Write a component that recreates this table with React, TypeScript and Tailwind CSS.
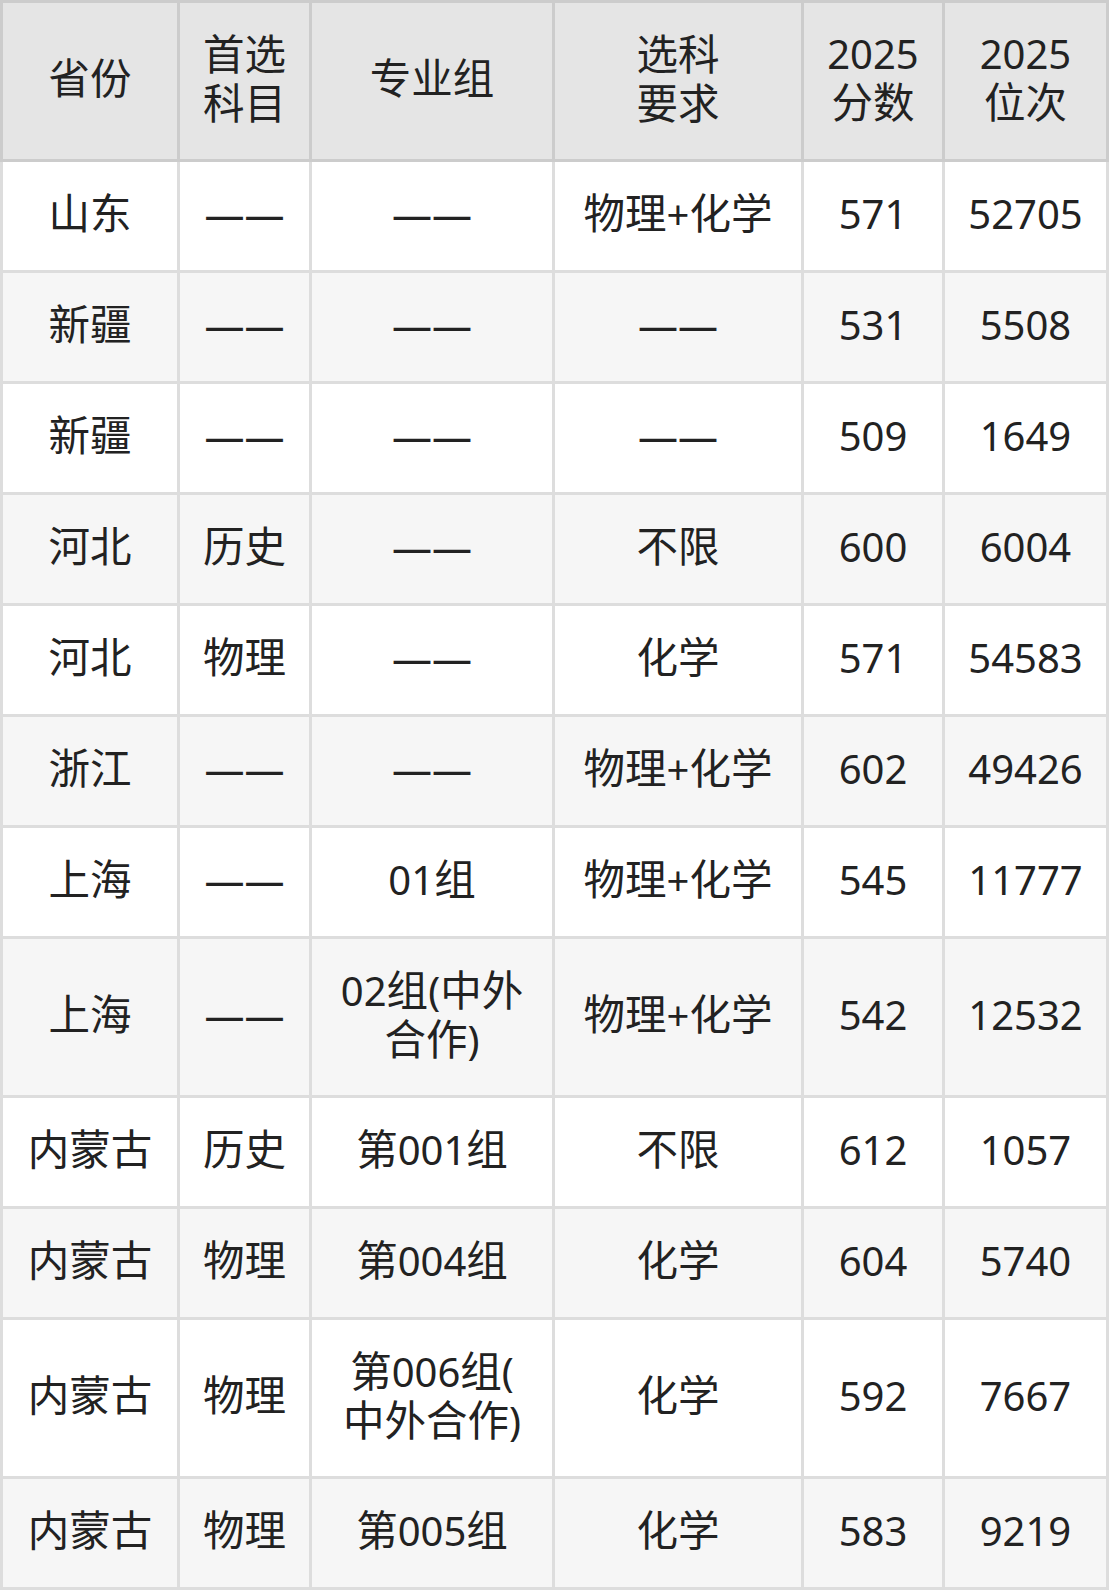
// Admission scores table: province / subject / group / requirement / 2025 score / 2025 rank.

import { Fragment, type ReactElement, type ReactNode } from 'react';

type Row = {
  province: string;
  subject: string;
  group: string[];
  requirement: string;
  score: string;
  rank: string;
};

const DASH = '——';

const ROWS: Row[] = [
  { province: '山东', subject: DASH, group: [DASH], requirement: '物理+化学', score: '571', rank: '52705' },
  { province: '新疆', subject: DASH, group: [DASH], requirement: DASH, score: '531', rank: '5508' },
  { province: '新疆', subject: DASH, group: [DASH], requirement: DASH, score: '509', rank: '1649' },
  { province: '河北', subject: '历史', group: [DASH], requirement: '不限', score: '600', rank: '6004' },
  { province: '河北', subject: '物理', group: [DASH], requirement: '化学', score: '571', rank: '54583' },
  { province: '浙江', subject: DASH, group: [DASH], requirement: '物理+化学', score: '602', rank: '49426' },
  { province: '上海', subject: DASH, group: ['01组'], requirement: '物理+化学', score: '545', rank: '11777' },
  { province: '上海', subject: DASH, group: ['02组(中外', '合作)'], requirement: '物理+化学', score: '542', rank: '12532' },
  { province: '内蒙古', subject: '历史', group: ['第001组'], requirement: '不限', score: '612', rank: '1057' },
  { province: '内蒙古', subject: '物理', group: ['第004组'], requirement: '化学', score: '604', rank: '5740' },
  { province: '内蒙古', subject: '物理', group: ['第006组(', '中外合作)'], requirement: '化学', score: '592', rank: '7667' },
  { province: '内蒙古', subject: '物理', group: ['第005组'], requirement: '化学', score: '583', rank: '9219' },
];

const HEADERS: string[][] = [
  ['省份'],
  ['首选', '科目'],
  ['专业组'],
  ['选科', '要求'],
  ['2025', '分数'],
  ['2025', '位次'],
];

const COLS = 'grid grid-cols-[174px_129px_240px_246px_138px_161px] gap-x-[3px]';

// The CJK glyphs in the source render a touch larger than the Latin digits.
function Mixed({ text }: { text: string }): ReactElement {
  const parts = text.split(/([\u4e00-\u9fff]+)/).filter(Boolean);
  return (
    <>
      {parts.map((p, i) =>
        /[\u4e00-\u9fff]/.test(p) ? (
          <span key={i} className="text-[41.5px]">
            {p}
          </span>
        ) : (
          <Fragment key={i}>{p}</Fragment>
        ),
      )}
    </>
  );
}

function Cell({ lines, className }: { lines: string[]; className: string }): ReactElement {
  return (
    <div className={`flex items-center justify-center pb-[5px] text-center leading-[48px] ${className}`}>
      <div>
        {lines.map((l, i) => (
          <div key={i}>
            <Mixed text={l} />
          </div>
        ))}
      </div>
    </div>
  );
}

export default function App(): ReactElement {
  return (
    <div
      className="w-[1109px] bg-white text-[40px] text-[#222]"
      style={{ fontFamily: '"Noto Sans", "Noto Sans CJK SC", sans-serif' }}
    >
      <div className={`${COLS} bg-[#cccccc] p-[3px]`}>
        {HEADERS.map((h, i) => (
          <Cell key={i} lines={h} className="h-[156px] bg-[#e5e5e5]" />
        ))}
      </div>
      <div className={`${COLS} gap-y-[3px] bg-[#dddddd] px-[3px] pb-[3px]`}>
        {ROWS.map((r, i) => {
          const bg = i % 2 === 0 ? 'bg-white' : 'bg-[#f6f6f6]';
          const h = r.group.length > 1 ? 'h-[156px]' : 'h-[108px]';
          const cls = `${h} ${bg}`;
          const cells: ReactNode[] = [
            <Cell key="p" lines={[r.province]} className={cls} />,
            <Cell key="s" lines={[r.subject]} className={cls} />,
            <Cell key="g" lines={r.group} className={cls} />,
            <Cell key="r" lines={[r.requirement]} className={cls} />,
            <Cell key="sc" lines={[r.score]} className={cls} />,
            <Cell key="rk" lines={[r.rank]} className={cls} />,
          ];
          return <Fragment key={i}>{cells}</Fragment>;
        })}
      </div>
    </div>
  );
}
